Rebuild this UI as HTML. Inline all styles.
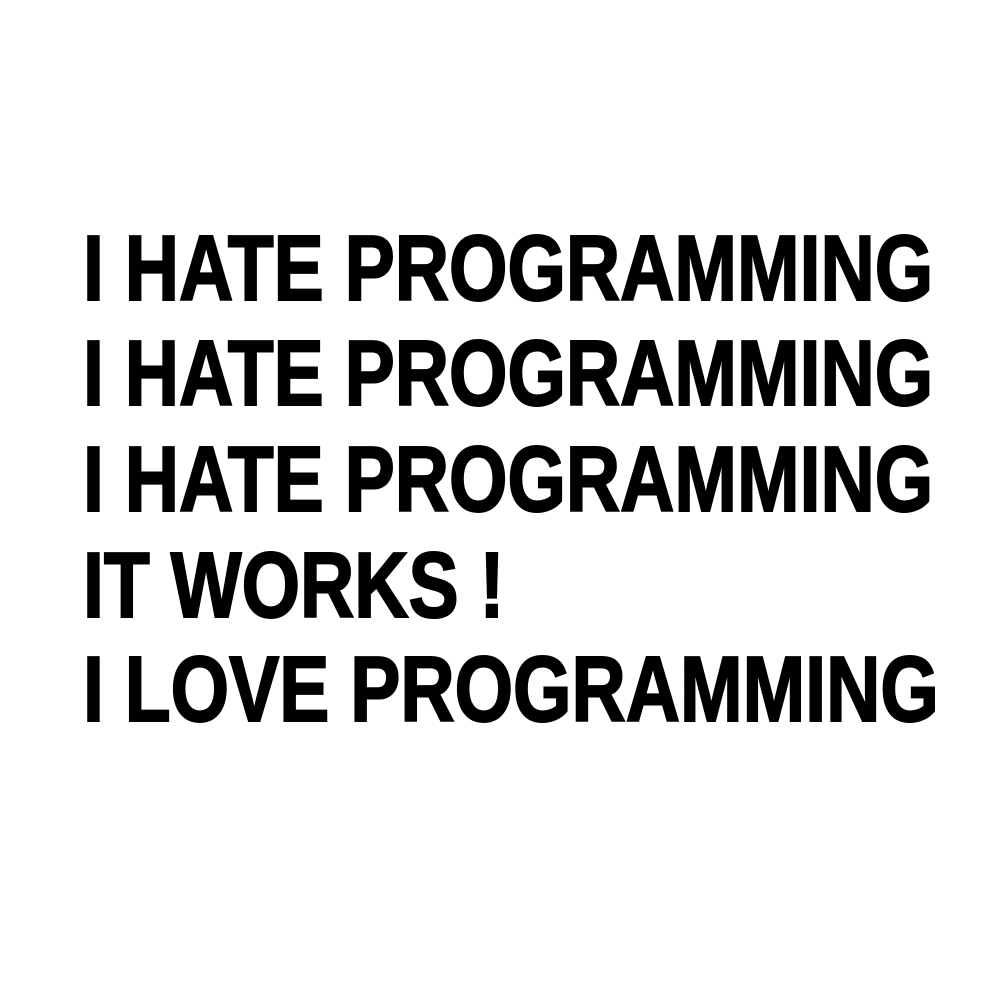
<!DOCTYPE html>
<html><head><meta charset="utf-8"><style>
html,body{margin:0;padding:0;background:#fff;width:1000px;height:1001px;overflow:hidden}
.l{position:absolute;left:83px;font-family:"Liberation Sans Narrow","Liberation Sans",sans-serif;font-weight:bold;font-size:93px;line-height:89px;color:#000;white-space:nowrap;transform-origin:0 0;transform:scaleX(0.8);-webkit-text-stroke:2px #000}
</style></head><body>
<div class="l" style="top:224px">I HATE PROGRAMMING</div>
<div class="l" style="top:329px">I HATE PROGRAMMING</div>
<div class="l" style="top:435px">I HATE PROGRAMMING</div>
<div class="l" style="top:541px">IT WORKS !</div>
<div class="l" style="top:645px">I LOVE PROGRAMMING</div>
<script>
var ls=document.querySelectorAll('.l');var w=ls[0].scrollWidth;var s=850/w;
ls.forEach(function(e){e.style.transform='scaleX('+s+')';});
</script>
</body></html>
